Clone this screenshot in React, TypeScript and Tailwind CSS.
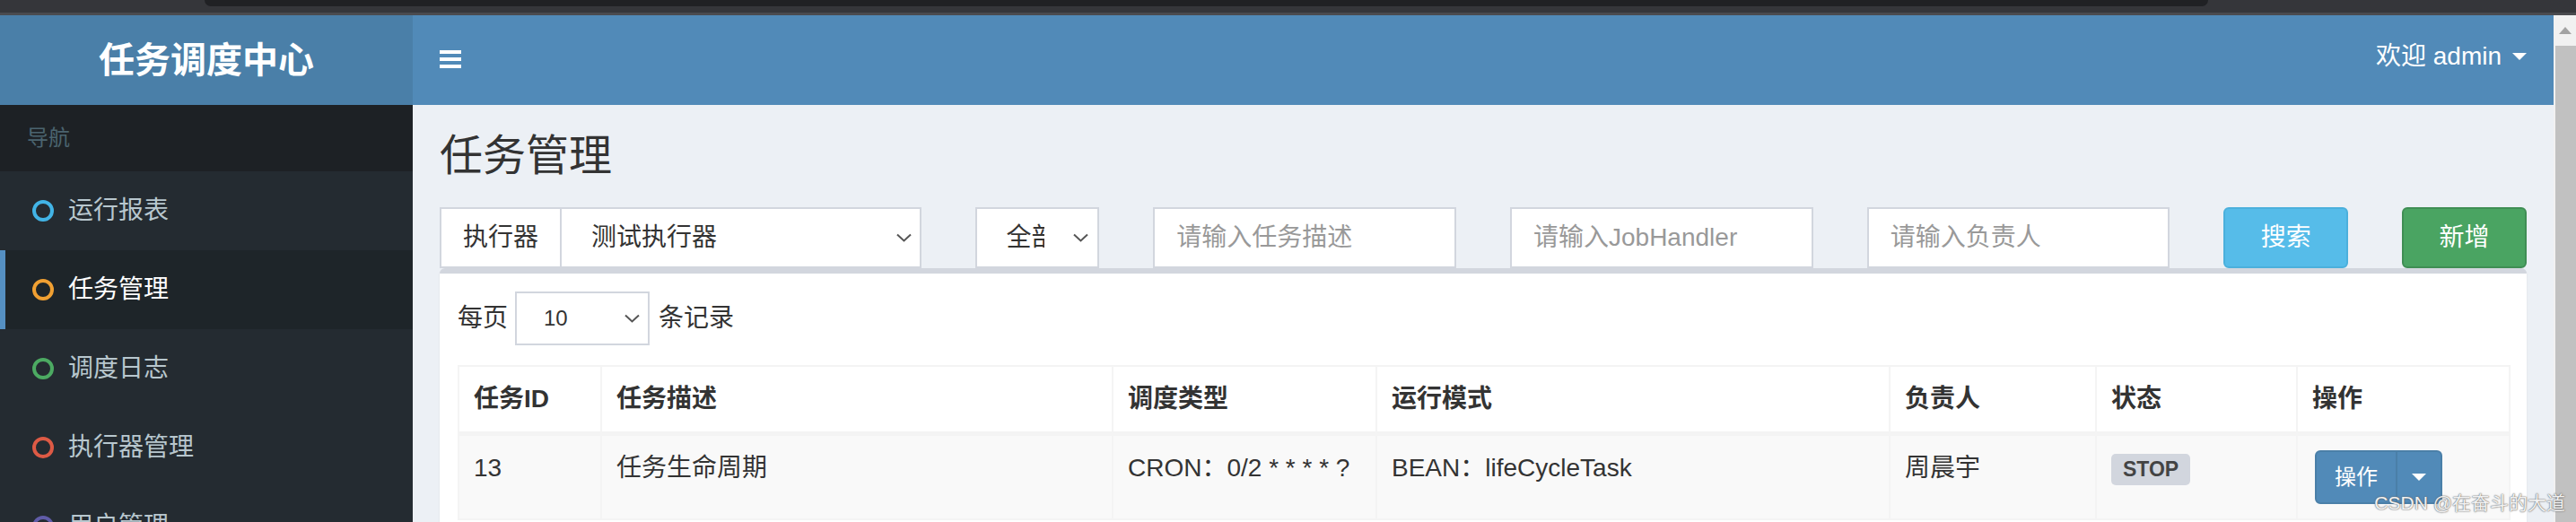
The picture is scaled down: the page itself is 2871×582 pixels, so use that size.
import React from "react";

const FONT = "font-['Liberation_Sans','Noto_Sans_CJK_SC',sans-serif]";

type NavItem = { label: string; ring: string; active?: boolean };

const navItems: NavItem[] = [
  { label: "运行报表", ring: "border-[#42b4e6]" },
  { label: "任务管理", ring: "border-[#f0a032]", active: true },
  { label: "调度日志", ring: "border-[#4caa62]" },
  { label: "执行器管理", ring: "border-[#dd5a45]" },
  { label: "用户管理", ring: "border-[#605ca8]" },
];

function Chevron() {
  return (
    <svg width="17" height="10" viewBox="0 0 17 10" className="shrink-0">
      <path d="M1 1.5l7.5 7 7.5-7" fill="none" stroke="#555" strokeWidth="2" />
    </svg>
  );
}

function Caret({ color = "#fff" }: { color?: string }) {
  return (
    <svg width="16" height="8" viewBox="0 0 16 8" className="shrink-0">
      <path d="M0 0h16L8 8z" fill={color} />
    </svg>
  );
}

function TextInput({ placeholder }: { placeholder: string }) {
  return (
    <div className="h-[68px] bg-white border-2 border-[#d2d6de] px-[24px] flex items-center text-[28px] text-[#999] whitespace-nowrap overflow-hidden">
      {placeholder}
    </div>
  );
}

export default function App() {
  return (
    <div className={`${FONT} relative w-[2871px] h-[582px] overflow-hidden flex flex-col bg-[#ecf0f5] text-[#333]`}>
      {/* browser chrome strip */}
      <div className="h-[17px] shrink-0 bg-[#35363a] border-b-[3px] border-[#4a4b4f] relative">
        <div className="absolute left-[228px] w-[2233px] top-0 h-[7px] bg-[#202124] rounded-b-[8px]" />
      </div>

      <div className="flex flex-1 min-h-0">
        <div className="w-[2846px] flex flex-col">
          {/* top header */}
          <div className="h-[100px] flex shrink-0">
            <div className="w-[460px] bg-[#4a7fa8] flex items-center justify-center text-white text-[40px] font-bold">
              任务调度中心
            </div>
            <div className="flex-1 bg-[#518ab8] flex items-center justify-between pl-[30px] pr-[30px]">
              <div className="flex flex-col gap-[4px] pb-[2px]">
                <div className="w-[24px] h-[4px] bg-white" />
                <div className="w-[24px] h-[4px] bg-white" />
                <div className="w-[24px] h-[4px] bg-white" />
              </div>
              <div className="flex items-center gap-[12px] text-white text-[28px] pb-[8px]">
                <span>欢迎 admin</span>
                <Caret />
              </div>
            </div>
          </div>

          <div className="flex flex-1 min-h-0">
            {/* sidebar */}
            <div className="w-[460px] bg-[#242b31] flex flex-col shrink-0 overflow-hidden">
              <div className="h-[74px] shrink-0 bg-[#1d2125] pl-[30px] flex items-center text-[24px] text-[#4b646f]">
                导航
              </div>
              {navItems.map((item) => (
                <div
                  key={item.label}
                  className={`h-[88px] shrink-0 flex items-center border-l-[6px] pl-[30px] text-[28px] ${
                    item.active
                      ? "bg-[#1e2529] border-[#5590c2] text-white"
                      : "border-transparent text-[#b8c7ce]"
                  }`}
                >
                  <div className={`w-[24px] h-[24px] rounded-full border-[4px] ${item.ring}`} />
                  <span className="ml-[16px]">{item.label}</span>
                </div>
              ))}
            </div>

            {/* content */}
            <div className="flex-1 min-w-0">
              <div className="px-[30px] pt-[30px]">
                <h1 className="text-[48px] leading-[53px] text-[#333]">任务管理</h1>
              </div>

              <div className="px-[30px] pt-[31px]">
                {/* filters */}
                <div className="grid grid-cols-12 -mx-[30px]">
                  <div className="col-span-3 px-[30px] flex">
                    <div className="h-[68px] border-2 border-[#d2d6de] border-r-0 bg-white px-[24px] flex items-center text-[28px] text-[#333]">
                      执行器
                    </div>
                    <div className="flex-1 h-[68px] border-2 border-[#d2d6de] bg-white pl-[33px] pr-[9px] flex items-center justify-between text-[28px] text-[#333]">
                      <span>测试执行器</span>
                      <Chevron />
                    </div>
                  </div>
                  <div className="col-span-1 px-[30px]">
                    <div className="h-[68px] border-2 border-[#d2d6de] bg-white pl-[33px] pr-[10px] flex items-center justify-between text-[28px] text-[#333]">
                      <span className="w-[42px] overflow-hidden whitespace-nowrap">全部</span>
                      <Chevron />
                    </div>
                  </div>
                  <div className="col-span-2 px-[30px]">
                    <TextInput placeholder="请输入任务描述" />
                  </div>
                  <div className="col-span-2 px-[30px]">
                    <TextInput placeholder="请输入JobHandler" />
                  </div>
                  <div className="col-span-2 px-[30px]">
                    <TextInput placeholder="请输入负责人" />
                  </div>
                  <div className="col-span-1 px-[30px]">
                    <div className="h-[68px] rounded-[6px] bg-[#56bce9] border-2 border-[#4bb0dc] flex items-center justify-center text-white text-[28px]">
                      搜索
                    </div>
                  </div>
                  <div className="col-span-1 px-[30px]">
                    <div className="h-[68px] rounded-[6px] bg-[#4aa462] border-2 border-[#3f8e54] flex items-center justify-center text-white text-[28px]">
                      新增
                    </div>
                  </div>
                </div>

                {/* box */}
                <div className="bg-white border-t-[6px] border-[#d2d6de] rounded-[6px] shadow-[0_2px_2px_rgba(0,0,0,0.1)] p-[20px]">
                  <div className="flex items-center text-[28px] text-[#333] h-[60px]">
                    <span>每页</span>
                    <div className="ml-[8px] w-[150px] h-[60px] border-2 border-[#d2d6de] flex items-center justify-between pl-[30px] pr-[9px] text-[24px]">
                      <span>10</span>
                      <Chevron />
                    </div>
                    <span className="ml-[10px]">条记录</span>
                  </div>

                  <table className="mt-[22px] w-[2286px] table-fixed border-collapse border-2 border-[#f4f4f4] text-[28px] leading-[40px] text-[#333]">
                    <colgroup>
                      <col className="w-[159px]" />
                      <col className="w-[570px]" />
                      <col className="w-[294px]" />
                      <col className="w-[572px]" />
                      <col className="w-[230px]" />
                      <col className="w-[224px]" />
                      <col className="w-[237px]" />
                    </colgroup>
                    <thead>
                      <tr className="bg-white">
                        {["任务ID", "任务描述", "调度类型", "运行模式", "负责人", "状态", "操作"].map((h) => (
                          <th
                            key={h}
                            className="p-[16px] text-left font-bold border-2 border-b-[5px] border-[#f4f4f4] align-bottom"
                          >
                            {h}
                          </th>
                        ))}
                      </tr>
                    </thead>
                    <tbody>
                      <tr className="bg-[#f9f9f9]">
                        <td className="p-[16px] border-2 border-[#f4f4f4] align-top">13</td>
                        <td className="p-[16px] border-2 border-[#f4f4f4] align-top">任务生命周期</td>
                        <td className="p-[16px] border-2 border-[#f4f4f4] align-top whitespace-nowrap">CRON：0/2 * * * * ?</td>
                        <td className="p-[16px] border-2 border-[#f4f4f4] align-top">BEAN：lifeCycleTask</td>
                        <td className="p-[16px] border-2 border-[#f4f4f4] align-top">周晨宇</td>
                        <td className="p-[16px] border-2 border-[#f4f4f4] align-top">
                          <div className="mt-[3px] inline-flex items-center h-[35px] px-[13px] rounded-[5px] bg-[#d2d6de] text-[#444] text-[23px] font-bold leading-none">
                            STOP
                          </div>
                        </td>
                        <td className="p-[16px] border-2 border-[#f4f4f4] align-top">
                          <div className="flex ml-[3px]">
                            <div className="h-[60px] px-[20px] flex items-center bg-[#518ab8] border-2 border-[#4a7fa8] rounded-l-[6px] text-white text-[24px]">
                              操作
                            </div>
                            <div className="h-[60px] px-[16px] flex items-center bg-[#518ab8] border-2 border-l-0 border-[#4a7fa8] rounded-r-[6px]">
                              <Caret />
                            </div>
                          </div>
                        </td>
                      </tr>
                    </tbody>
                  </table>
                </div>
              </div>
            </div>
          </div>
        </div>

        {/* scrollbar */}
        <div className="w-[25px] shrink-0 bg-[#f1f1f1] flex flex-col">
          <div className="h-[34px] flex items-center justify-center">
            <svg width="14" height="8" viewBox="0 0 14 8">
              <path d="M0 8h14L7 0z" fill="#a3a3a3" />
            </svg>
          </div>
          <div className="flex-1 ml-[2px] bg-[#c1c1c1]" />
        </div>
      </div>

      {/* watermark */}
      <div className="absolute right-[12px] bottom-[6px] text-[21px] text-[#f2f2f2] [text-shadow:0_0_2px_#666,0_0_1px_#666]">
        CSDN @在奋斗的大道
      </div>
    </div>
  );
}
